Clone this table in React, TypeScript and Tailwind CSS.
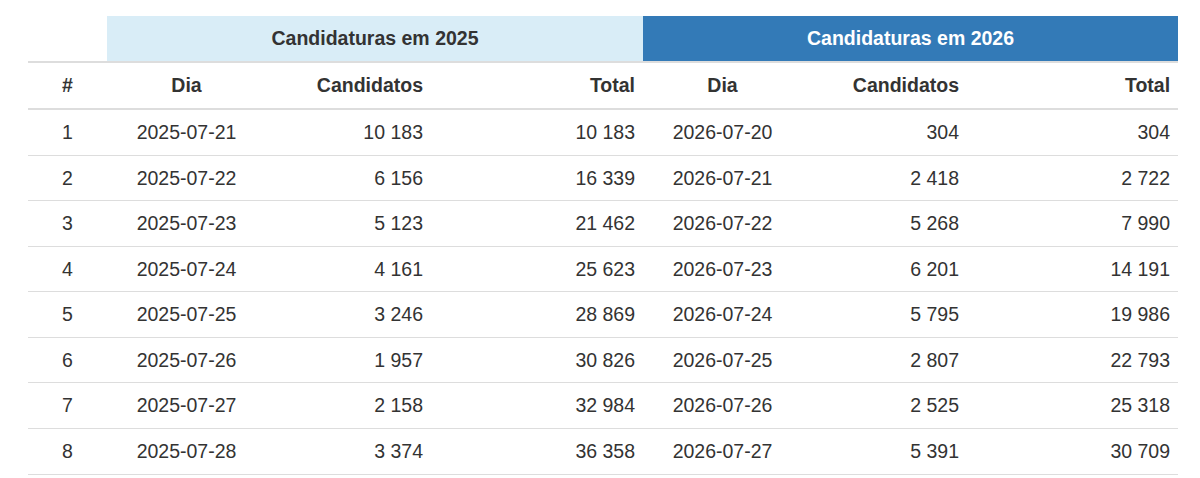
const rows: [string, string, string, string, string, string][] = [
  ['2025-07-21', '10 183', '10 183', '2026-07-20', '304', '304'],
  ['2025-07-22', '6 156', '16 339', '2026-07-21', '2 418', '2 722'],
  ['2025-07-23', '5 123', '21 462', '2026-07-22', '5 268', '7 990'],
  ['2025-07-24', '4 161', '25 623', '2026-07-23', '6 201', '14 191'],
  ['2025-07-25', '3 246', '28 869', '2026-07-24', '5 795', '19 986'],
  ['2025-07-26', '1 957', '30 826', '2026-07-25', '2 807', '22 793'],
  ['2025-07-27', '2 158', '32 984', '2026-07-26', '2 525', '25 318'],
  ['2025-07-28', '3 374', '36 358', '2026-07-27', '5 391', '30 709'],
]

const cell = 'px-2 py-2 leading-[28.57px]'
const head = 'px-2 py-2 leading-[29px]'

export default function App() {
  return (
    <div className="bg-white min-h-screen pt-4 pl-[28px] font-['Liberation_Sans',Arial,sans-serif] text-[19.5px] text-[#333]">
      <table className="w-[1150px] table-fixed border-collapse">
        <colgroup>
          <col className="w-[79px]" />
          <col className="w-[159px]" />
          <col className="w-[165px]" />
          <col className="w-[212px]" />
          <col className="w-[159px]" />
          <col className="w-[165px]" />
          <col className="w-[211px]" />
        </colgroup>
        <thead>
          <tr className="border-b-2 border-[#ddd]">
            <th className={head}></th>
            <th colSpan={3} className={`${head} bg-[#d9edf7] text-center font-bold`}>
              Candidaturas em 2025
            </th>
            <th colSpan={3} className={`${head} bg-[#337ab7] text-center font-bold text-white`}>
              Candidaturas em 2026
            </th>
          </tr>
          <tr className="border-b-2 border-[#ddd] font-bold">
            <th className={`${head} text-center`}>#</th>
            <th className={`${head} text-center`}>Dia</th>
            <th className={`${head} text-right`}>Candidatos</th>
            <th className={`${head} text-right`}>Total</th>
            <th className={`${head} text-center`}>Dia</th>
            <th className={`${head} text-right`}>Candidatos</th>
            <th className={`${head} text-right`}>Total</th>
          </tr>
        </thead>
        <tbody>
          {rows.map((r, i) => (
            <tr key={i} className="border-b border-[#ddd]">
              <td className={`${cell} text-center`}>{i + 1}</td>
              <td className={`${cell} text-center`}>{r[0]}</td>
              <td className={`${cell} text-right`}>{r[1]}</td>
              <td className={`${cell} text-right`}>{r[2]}</td>
              <td className={`${cell} text-center`}>{r[3]}</td>
              <td className={`${cell} text-right`}>{r[4]}</td>
              <td className={`${cell} text-right`}>{r[5]}</td>
            </tr>
          ))}
        </tbody>
      </table>
    </div>
  )
}
